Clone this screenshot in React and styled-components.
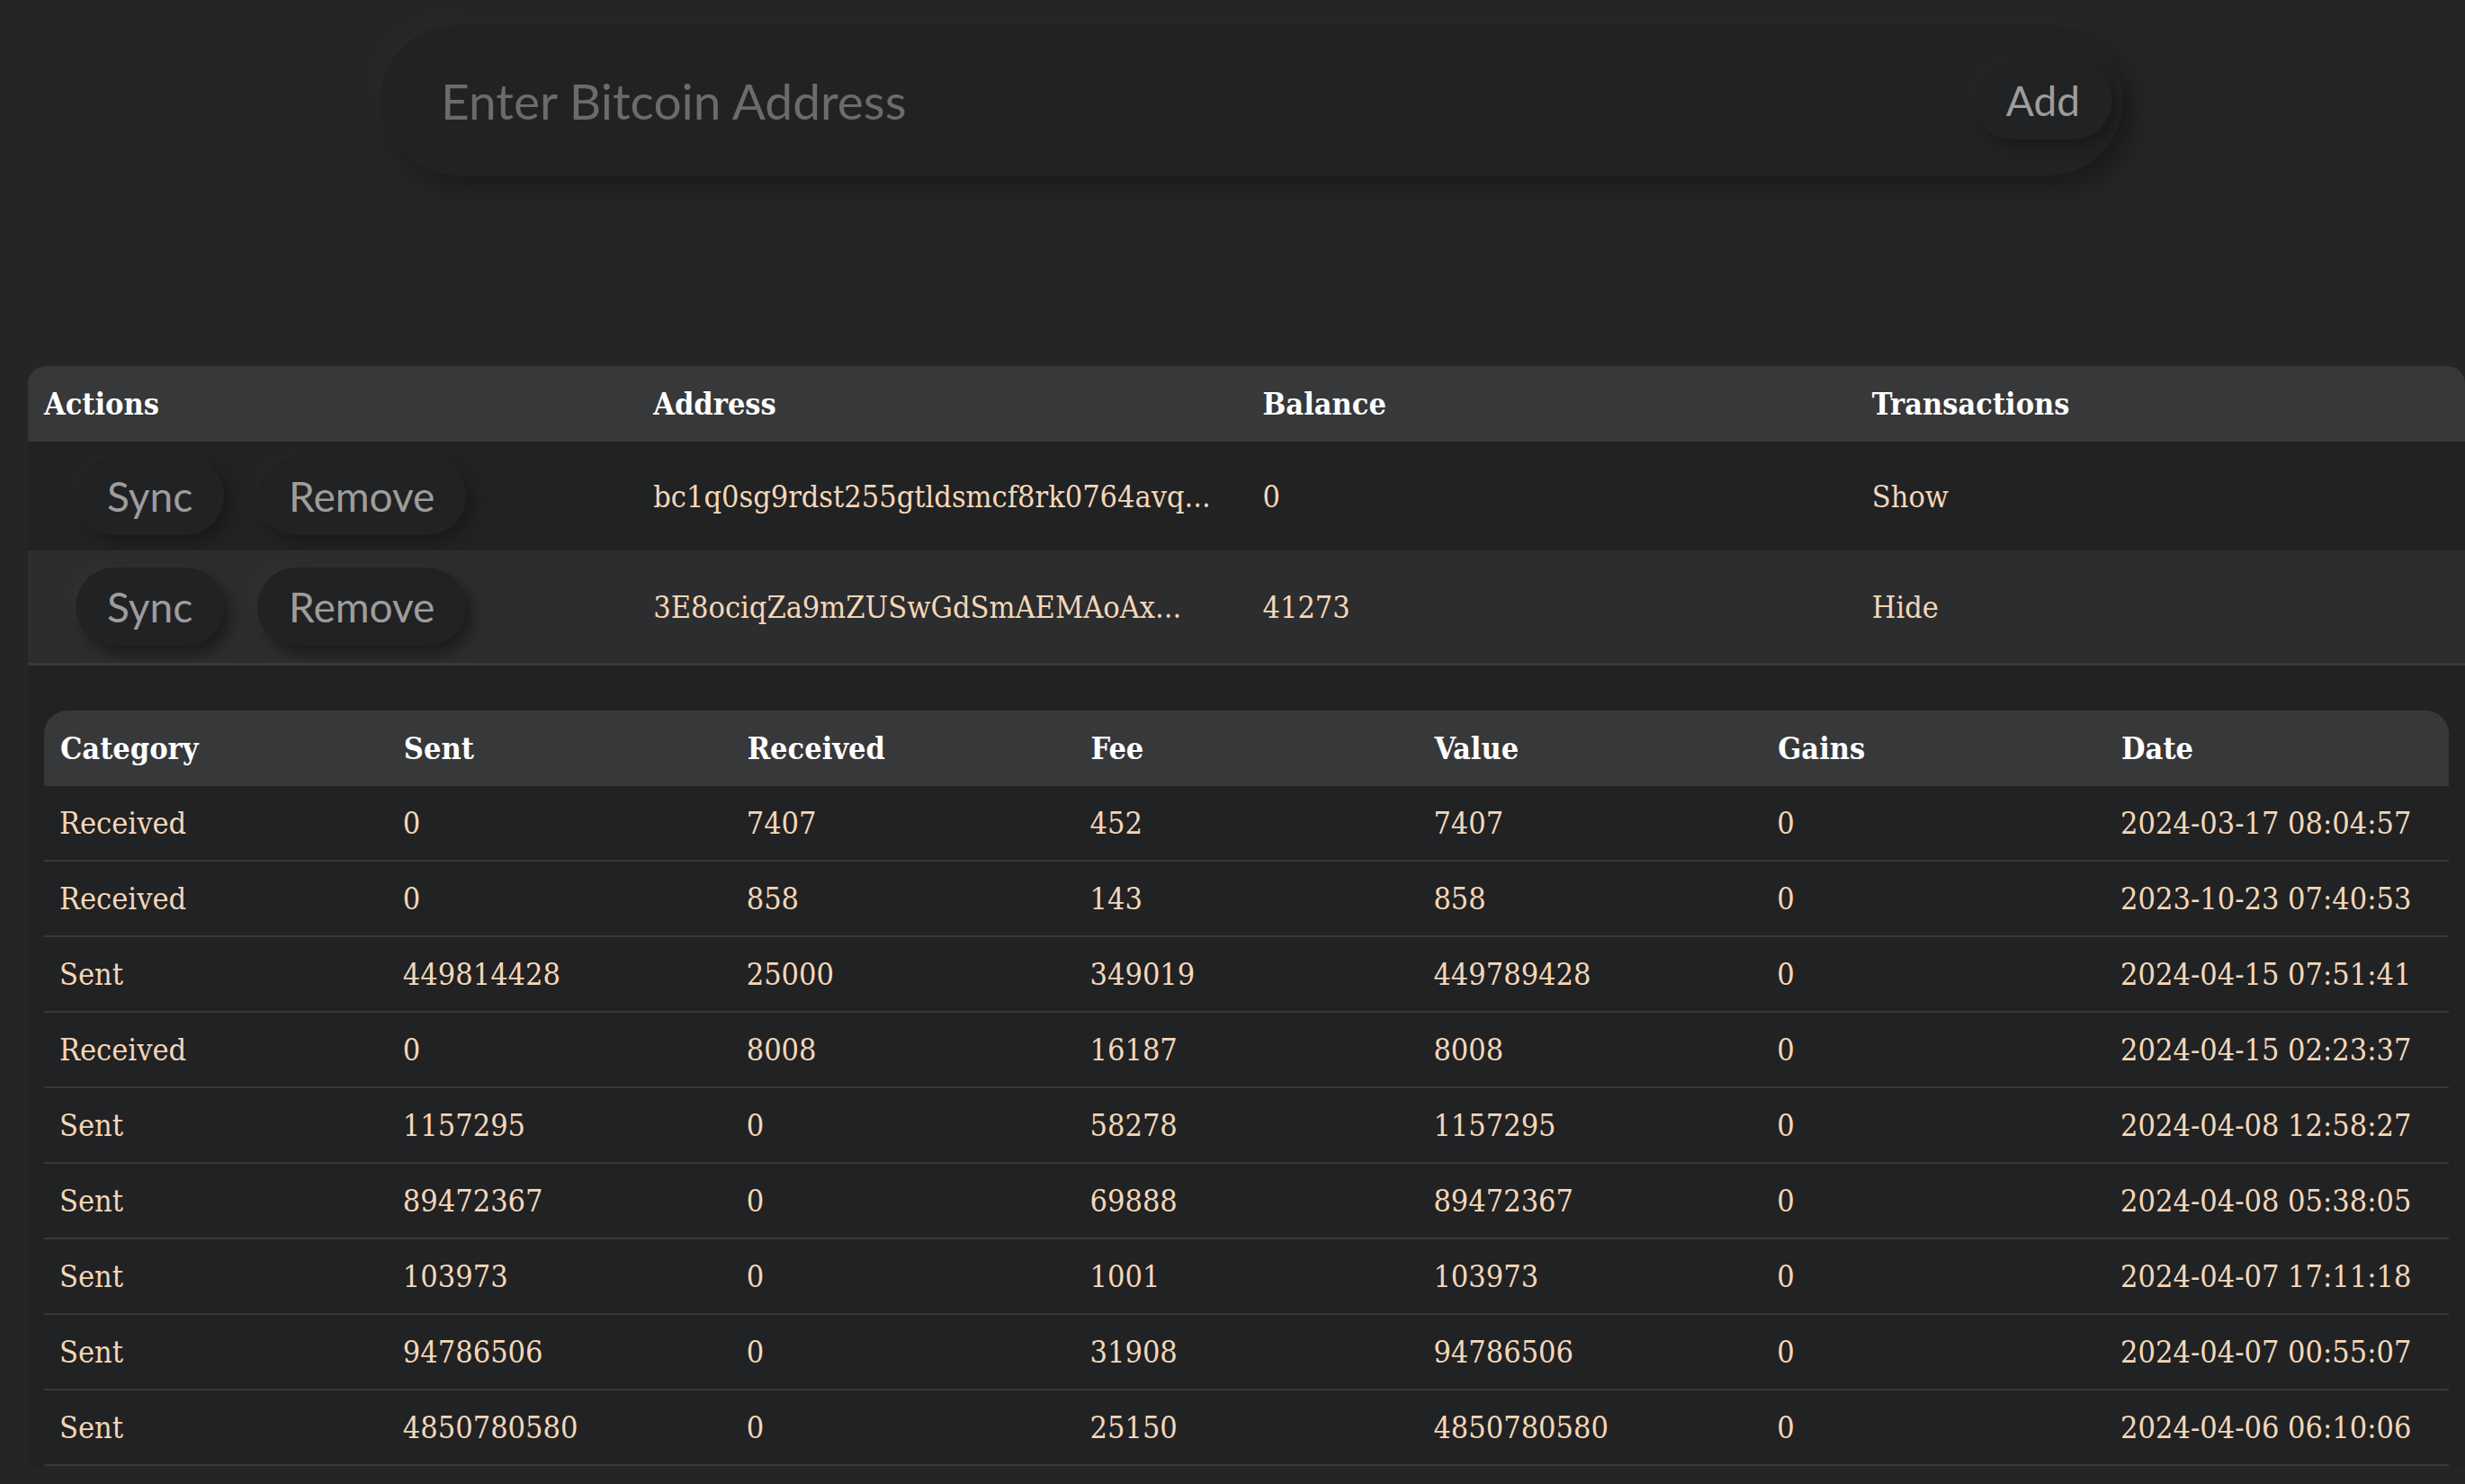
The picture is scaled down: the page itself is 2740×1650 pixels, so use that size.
import React from "react";
import styled, { createGlobalStyle } from "styled-components";

const GlobalStyle = createGlobalStyle`
  body {
    margin: 0;
    background: #242527;
  }
`;

const slab = `"DejaVu Serif Condensed", "DejaVu Serif", serif`;
const sans = `Lato, "Open Sans", sans-serif`;

const Page = styled.div`
  padding: 28px 0 40px;
`;

const AddressBar = styled.form`
  display: flex;
  align-items: center;
  box-sizing: border-box;
  margin-left: 423px;
  width: 1937px;
  height: 167px;
  padding: 0 12px 0 65px;
  background: #212224;
  border-radius: 84px;
  box-shadow: 12px 14px 26px rgba(0, 0, 0, 0.28),
    -10px -10px 24px rgba(255, 255, 255, 0.02);
`;

const AddressInput = styled.input`
  flex: 1;
  min-width: 0;
  border: none;
  outline: none;
  background: transparent;
  font-family: ${sans};
  font-size: 55px;
  color: #d0d0d0;

  &::placeholder {
    color: #6b6b6b;
  }
`;

const PillButton = styled.button`
  flex: none;
  height: 87px;
  padding: 0 ${(p) => p.$pad || 35}px;
  margin-right: ${(p) => p.$gap || 0}px;
  border: none;
  border-radius: 44px;
  background: #212224;
  font-family: ${sans};
  font-size: 46px;
  color: #9d9d9d;
  box-shadow: ${(p) =>
    p.$raised
      ? "8px 10px 16px rgba(0, 0, 0, 0.38), -6px -6px 14px rgba(255, 255, 255, 0.02)"
      : "8px 8px 16px rgba(0, 0, 0, 0.25), -6px -6px 14px rgba(255, 255, 255, 0.025)"};
`;

const AddressTable = styled.table`
  margin: 212px 0 0 31px;
  width: calc(100% - 31px);
  border-collapse: separate;
  border-spacing: 0;
  table-layout: fixed;
  font-family: ${slab};
  font-stretch: condensed;
`;

const HeadCell = styled.th`
  height: ${(p) => p.$h || 84}px;
  padding: 0 18px;
  background: #37383a;
  color: #ffffff;
  font-size: 34px;
  font-weight: bold;
  text-align: left;

  &:first-child {
    border-top-left-radius: ${(p) => p.$r || 20}px;
  }
  &:last-child {
    border-top-right-radius: ${(p) => p.$r || 20}px;
  }
`;

const AddrCell = styled.td`
  height: ${(p) => (p.$active ? 125 : 121)}px;
  padding: 0 18px;
  background: ${(p) => (p.$active ? "#2c2d2f" : "#212224")};
  color: #f4d7b8;
  font-size: 34px;
  white-space: nowrap;
  overflow: hidden;
  text-overflow: ellipsis;
`;

const ActionCell = styled(AddrCell)`
  padding-left: 53px;
`;

const DetailCell = styled.td`
  padding: 50px 18px 0;
  background: #212224;
  border-top: 3px solid #38393b;
`;

const TxTable = styled.table`
  width: 100%;
  border-collapse: separate;
  border-spacing: 0;
  table-layout: fixed;
`;

const TxCell = styled.td`
  height: 82px;
  padding: 0 17px;
  border-bottom: 2px solid #37383a;
  color: #f4d7b8;
  font-size: 34px;
  white-space: nowrap;
`;

const addresses = [
  { address: "bc1q0sg9rdst255gtldsmcf8rk0764avq...", balance: "0", open: false },
  { address: "3E8ociqZa9mZUSwGdSmAEMAoAx...", balance: "41273", open: true },
];

const txHeads = ["Category", "Sent", "Received", "Fee", "Value", "Gains", "Date"];

const txs = [
  ["Received", "0", "7407", "452", "7407", "0", "2024-03-17 08:04:57"],
  ["Received", "0", "858", "143", "858", "0", "2023-10-23 07:40:53"],
  ["Sent", "449814428", "25000", "349019", "449789428", "0", "2024-04-15 07:51:41"],
  ["Received", "0", "8008", "16187", "8008", "0", "2024-04-15 02:23:37"],
  ["Sent", "1157295", "0", "58278", "1157295", "0", "2024-04-08 12:58:27"],
  ["Sent", "89472367", "0", "69888", "89472367", "0", "2024-04-08 05:38:05"],
  ["Sent", "103973", "0", "1001", "103973", "0", "2024-04-07 17:11:18"],
  ["Sent", "94786506", "0", "31908", "94786506", "0", "2024-04-07 00:55:07"],
  ["Sent", "4850780580", "0", "25150", "4850780580", "0", "2024-04-06 06:10:06"],
];

const Transactions = () => (
  <TxTable>
    <thead>
      <tr>
        {txHeads.map((h) => (
          <HeadCell key={h} $r={26}>{h}</HeadCell>
        ))}
      </tr>
    </thead>
    <tbody>
      {txs.map((row, i) => (
        <tr key={i}>
          {row.map((v, j) => (
            <TxCell key={j}>{v}</TxCell>
          ))}
        </tr>
      ))}
    </tbody>
  </TxTable>
);

const App = () => (
  <Page>
    <GlobalStyle />
    <AddressBar onSubmit={(e) => e.preventDefault()}>
      <AddressInput placeholder="Enter Bitcoin Address" />
      <PillButton $pad={36}>Add</PillButton>
    </AddressBar>

    <AddressTable>
      <thead>
        <tr>
          <HeadCell>Actions</HeadCell>
          <HeadCell>Address</HeadCell>
          <HeadCell>Balance</HeadCell>
          <HeadCell>Transactions</HeadCell>
        </tr>
      </thead>
      <tbody>
        {addresses.map((a) => (
          <React.Fragment key={a.address}>
            <tr>
              <ActionCell $active={a.open}>
                <PillButton $gap={37} $raised={a.open}>Sync</PillButton>
                <PillButton $raised={a.open}>Remove</PillButton>
              </ActionCell>
              <AddrCell $active={a.open}>{a.address}</AddrCell>
              <AddrCell $active={a.open}>{a.balance}</AddrCell>
              <AddrCell $active={a.open}>{a.open ? "Hide" : "Show"}</AddrCell>
            </tr>
            {a.open && (
              <tr>
                <DetailCell colSpan={4}>
                  <Transactions />
                </DetailCell>
              </tr>
            )}
          </React.Fragment>
        ))}
      </tbody>
    </AddressTable>
  </Page>
);

export default App;
